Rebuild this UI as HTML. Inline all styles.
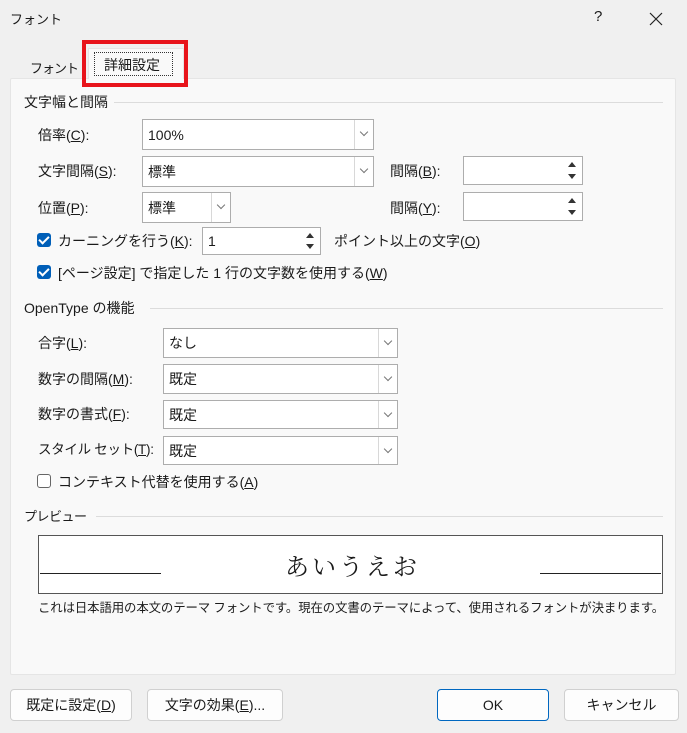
<!DOCTYPE html>
<html><head><meta charset="utf-8"><style>
*{box-sizing:border-box;margin:0;padding:0}
body{width:687px;height:733px;background:#f0f0f0;font-family:"Liberation Sans","Noto Sans CJK JP",sans-serif;font-size:14px;color:#1a1a1a;position:relative;overflow:hidden}
.a{position:absolute;white-space:nowrap}
.lbl{line-height:18px}
.box{position:absolute;background:#fff;border:1px solid #adadad}
.dd{position:absolute;right:0;top:0;bottom:0;width:19px;border-left:1px solid #d8d8d8;background:#fff}
.dd:after{content:"";position:absolute;left:6px;top:9px;width:5px;height:5px;border-right:1px solid #777;border-bottom:1px solid #777;transform:rotate(45deg)}
.spin{position:absolute;right:0;top:0;bottom:0;width:20px;background:#fff}
.spin:before{content:"";position:absolute;left:6px;top:5px;border:4px solid transparent;border-bottom:5px solid #333;border-top:0}
.spin:after{content:"";position:absolute;left:6px;bottom:5px;border:4px solid transparent;border-top:5px solid #333;border-bottom:0}
.txt{position:absolute;left:5px;top:50%;transform:translateY(-50%);font-size:14px}
.cb{position:absolute;width:14px;height:14px;border-radius:3px;background:#005fb8}
.cb:after{content:"";position:absolute;left:4px;top:1px;width:4px;height:8px;border-right:2px solid #fff;border-bottom:2px solid #fff;transform:rotate(45deg)}
.cbu{position:absolute;width:14px;height:14px;border-radius:3px;border:1px solid #666;background:#fff}
.sec{position:absolute;height:1px;background:#dcdcdc}
.btn{position:absolute;height:32px;background:#fdfdfd;border:1px solid #d0d0d0;border-radius:4px;text-align:center;line-height:30px}
u{text-decoration:underline}
</style></head><body>
<div class="a" style="left:10px;top:9px;font-size:13px">フォント</div>
<div class="a" style="left:594px;top:8px;font-size:15px">?</div>
<svg class="a" style="left:649px;top:12px" width="14" height="14"><path d="M1 1L13 13M13 1L1 13" stroke="#222" stroke-width="1.2"/></svg>
<div class="a" style="left:10px;top:78px;width:666px;height:597px;background:#f9f9f9;border:1px solid #e5e5e5;border-radius:2px"></div>
<div class="a" style="left:88px;top:48px;width:96px;height:31px;background:#f9f9f9;border:1px solid #e5e5e5;border-bottom:none"></div>
<div class="a" style="left:30px;top:58px;font-size:13px;letter-spacing:-1px">フォント</div>
<div class="a" style="left:94px;top:52px;width:79px;height:24px;border:1px dotted #333"></div>
<div class="a" style="left:104px;top:55px;font-size:14px">詳細設定</div>
<div class="a" style="left:82px;top:40px;width:106px;height:47px;border:4px solid #e8141b"></div>

<div class="a lbl" style="left:24px;top:93px">文字幅と間隔</div><div class="sec" style="left:114px;top:102px;width:549px"></div>
<div class="a lbl" style="left:38px;top:126px">倍率(<u>C</u>):</div>
<div class="box" style="left:142px;top:119px;width:232px;height:31px"><span class="txt">100%</span><div class="dd"></div></div>
<div class="a lbl" style="left:38px;top:162px">文字間隔(<u>S</u>):</div>
<div class="box" style="left:142px;top:156px;width:232px;height:31px"><span class="txt">標準</span><div class="dd"></div></div>
<div class="a lbl" style="left:390px;top:162px">間隔(<u>B</u>):</div>
<div class="box" style="left:463px;top:156px;width:120px;height:29px"><div class="spin"></div></div>
<div class="a lbl" style="left:38px;top:199px">位置(<u>P</u>):</div>
<div class="box" style="left:142px;top:192px;width:89px;height:31px"><span class="txt">標準</span><div class="dd"></div></div>
<div class="a lbl" style="left:390px;top:199px">間隔(<u>Y</u>):</div>
<div class="box" style="left:463px;top:192px;width:120px;height:29px"><div class="spin"></div></div>
<div class="cb" style="left:37px;top:233px"></div>
<div class="a lbl" style="left:58px;top:232px">カーニングを行う(<u>K</u>):</div>
<div class="box" style="left:202px;top:227px;width:119px;height:28px"><span class="txt">1</span><div class="spin"></div></div>
<div class="a lbl" style="left:334px;top:232px">ポイント以上の文字(<u>O</u>)</div>
<div class="cb" style="left:37px;top:265px"></div>
<div class="a lbl" style="left:58px;top:264px">[ページ設定] で指定した 1 行の文字数を使用する(<u>W</u>)</div>

<div class="a lbl" style="left:24px;top:299px">OpenType の機能</div><div class="sec" style="left:150px;top:308px;width:513px"></div>
<div class="a lbl" style="left:38px;top:334px">合字(<u>L</u>):</div>
<div class="box" style="left:163px;top:328px;width:235px;height:30px"><span class="txt">なし</span><div class="dd"></div></div>
<div class="a lbl" style="left:38px;top:370px">数字の間隔(<u>M</u>):</div>
<div class="box" style="left:163px;top:364px;width:235px;height:30px"><span class="txt">既定</span><div class="dd"></div></div>
<div class="a lbl" style="left:38px;top:405px">数字の書式(<u>F</u>):</div>
<div class="box" style="left:163px;top:400px;width:235px;height:29px"><span class="txt">既定</span><div class="dd"></div></div>
<div class="a lbl" style="left:38px;top:441px;font-size:13.5px;letter-spacing:-0.3px">スタイル セット(<u>T</u>):</div>
<div class="box" style="left:163px;top:436px;width:235px;height:29px"><span class="txt">既定</span><div class="dd"></div></div>
<div class="cbu" style="left:37px;top:474px"></div>
<div class="a lbl" style="left:58px;top:473px">コンテキスト代替を使用する(<u>A</u>)</div>

<div class="a lbl" style="left:24px;top:508px;font-size:13px;letter-spacing:-0.5px">プレビュー</div><div class="sec" style="left:96px;top:516px;width:567px"></div>
<div class="a" style="left:38px;top:535px;width:625px;height:59px;background:#fff;border:1px solid #555"></div>
<div class="a" style="left:40px;top:573px;width:121px;height:1px;background:#222"></div>
<div class="a" style="left:540px;top:573px;width:121px;height:1px;background:#222"></div>
<div class="a" style="left:285px;top:547px;font-family:'Noto Serif CJK SC','Liberation Serif',serif;font-size:24px;letter-spacing:3px">あいうえお</div>
<div class="a lbl" style="left:38px;top:599px;font-size:12.4px;letter-spacing:-0.1px">これは日本語用の本文のテーマ フォントです。現在の文書のテーマによって、使用されるフォントが決まります。</div>

<div class="btn" style="left:10px;top:689px;width:122px">既定に設定(<u>D</u>)</div>
<div class="btn" style="left:147px;top:689px;width:136px">文字の効果(<u>E</u>)...</div>
<div class="btn" style="left:437px;top:689px;width:112px;border-color:#0067c0">OK</div>
<div class="btn" style="left:564px;top:689px;width:115px">キャンセル</div>
</body></html>
